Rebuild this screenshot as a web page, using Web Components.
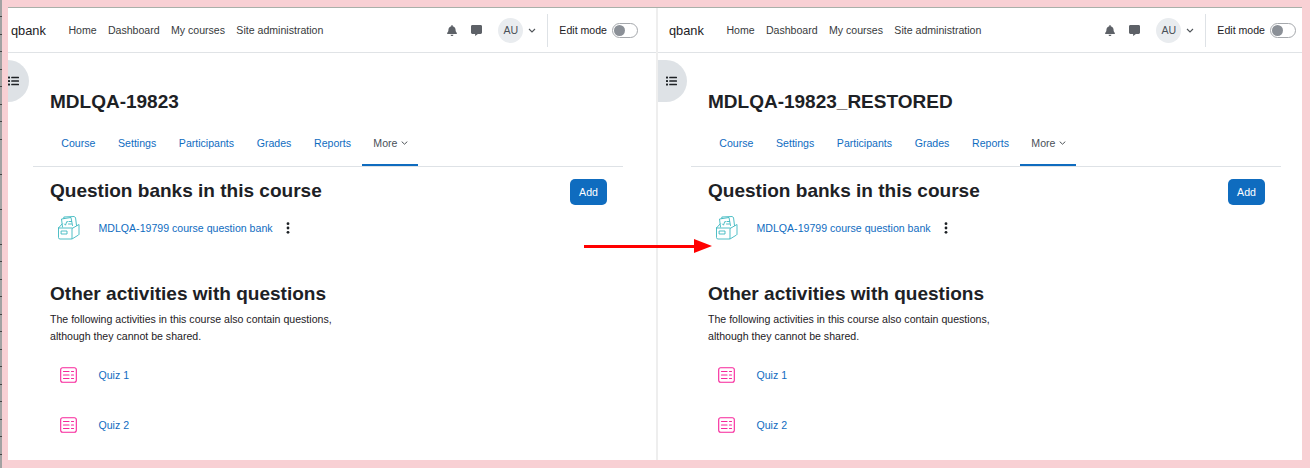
<!DOCTYPE html>
<html>
<head>
<meta charset="utf-8">
<title>qbank</title>
<style>
html, body { margin: 0; padding: 0; height: 100%; }
body { background: #f8d0d4; font-family: "Liberation Sans", Arial, sans-serif; overflow: hidden; }
</style>
</head>
<body>
<qb-screen>
  <qb-panel course="MDLQA-19823" inset></qb-panel>
  <qb-panel course="MDLQA-19823_RESTORED"></qb-panel>
</qb-screen>

<script>
// small icons used in more than one place
const icons = {
    bell: '<svg width="10" height="11" viewBox="0 0 448 512" preserveAspectRatio="none"><path fill="#5d6167" d="M224 512c35 0 64-29 64-64H160c0 35 29 64 64 64zm215-150c-19-21-56-52-56-154 0-78-54-140-127-155V32a32 32 0 1 0-64 0v21C119 68 65 130 65 208c0 102-37 133-56 154-6 6-9 14-9 22 0 16 13 32 32 32h384c19 0 32-16 32-32 0-8-3-16-9-22z"/></svg>',
    comment: '<svg width="11" height="11" viewBox="0 0 512 512"><path fill="#5d6167" d="M64 0h384c35 0 64 29 64 64v288c0 35-29 64-64 64H320l-110 90c-8 6-18 0-18-8v-82H64c-35 0-64-29-64-64V64C0 29 29 0 64 0z"/></svg>',
    caret: '<svg width="8" height="5" viewBox="0 0 8 5"><path fill="none" stroke="#4f5459" stroke-width="1.1" d="M1 1l3 3 3-3"/></svg>',
    tabCaret: '<svg width="7" height="4" viewBox="0 0 7 4"><path fill="none" stroke="#4f5459" stroke-width="1" d="M.7.6l2.800 2.600L6.300.6"/></svg>',
    list: '<svg width="11" height="10" viewBox="0 0 11 10"><g fill="#1d2125"><rect x="0" y="0.5" width="2" height="2" rx=".6"/><rect x="0" y="4" width="2" height="2" rx=".6"/><rect x="0" y="7.5" width="2" height="2" rx=".6"/><rect x="3.2" y="0.8" width="7.8" height="1.4" rx=".5"/><rect x="3.2" y="4.3" width="7.8" height="1.4" rx=".5"/><rect x="3.2" y="7.8" width="7.8" height="1.4" rx=".5"/></g></svg>',
    bank: '<svg width="22" height="24" viewBox="0 0 22 24" fill="none" stroke="#3cb8c0" stroke-width=".9" stroke-linejoin="round" stroke-linecap="round"><path d="M.5 12v9.500a1.500 1.500 0 0 0 1.500 1.500h11a1 1 0 0 0 1-1V12.500L21 8.500v9.500a1 1 0 0 1-.5 1L14 23"/><path d="M.5 12l3.500-4M.5 12H14"/><path d="M4.500 11L3.500 3 13 1.500l1.500 8"/><path d="M6 2.500L5.800 1 16 .5l1.500 1 1 8"/><path d="M6.500 8l1 1.200 1.200-3.500h1M11 5.500h2.500M10.500 8h3"/><rect x="3.500" y="15" width="5.500" height="3"/></svg>',
    quiz: '<svg width="17" height="16" viewBox="0 0 17 16" fill="none" stroke="#f7259b" stroke-width="1.100" stroke-linecap="round"><rect x=".7" y=".7" width="15.600" height="14.600" rx="2"/><path d="M3.500 4.500h5.500M3.500 8h5.500M3.500 11.500h5.500M11.500 4.500h2M11.500 8h2M11.500 11.500h2" stroke-width="1.200"/></svg>',
    dots: '<svg width="4" height="12" viewBox="0 0 4 12"><g fill="#1d2125"><circle cx="2" cy="1.700" r="1.400"/><circle cx="2" cy="6" r="1.400"/><circle cx="2" cy="10.300" r="1.400"/></g></svg>'
};

const navbarTemplate = document.createElement('template');
navbarTemplate.innerHTML = `
    <style>
    :host {
        display: flex;
        align-items: center;
        height: 45px;
        box-sizing: border-box;
        border-bottom: 1px solid #e0e3e6;
        padding: 0 19px 0 11px;
        font-size: 10.58px;
        color: #1d2125;
    }
    .brand { font-size: 12.800px; margin-right: 22.500px; }
    nav { display: flex; gap: 11.300px; color: #373a3c; }
    .right { margin-left: auto; display: flex; align-items: center; height: 100%; }
    .icon { display: flex; margin-right: 14px; }
    .icon + .icon { margin-right: 16px; }
    .avatar {
        width: 25px;
        height: 25px;
        border-radius: 50%;
        background: #e9ecef;
        display: flex;
        align-items: center;
        justify-content: center;
        color: #495057;
        margin-right: 5px;
    }
    .sep { width: 1px; height: 33px; background: #dee2e6; margin: 0 11px; }
    .toggle {
        width: 26px;
        height: 15px;
        box-sizing: border-box;
        border: 1px solid #a5a8ac;
        border-radius: 8px;
        margin-left: 5px;
        padding: 1px;
    }
    .toggle i { display: block; width: 11px; height: 11px; border-radius: 50%; background: #8b9097; }
    </style>
    <span class="brand">qbank</span>
    <nav>
        <span>Home</span>
        <span>Dashboard</span>
        <span>My courses</span>
        <span>Site administration</span>
    </nav>
    <div class="right">
        <span class="icon">${icons.bell}</span>
        <span class="icon">${icons.comment}</span>
        <span class="avatar">AU</span>
        ${icons.caret}
        <span class="sep"></span>
        <span>Edit mode</span>
        <span class="toggle"><i></i></span>
    </div>
`;

class QbNavbar extends HTMLElement {
    constructor() {
        super();
        this.attachShadow({ mode: 'open' });
        this.shadowRoot.appendChild(navbarTemplate.content.cloneNode(true));
    }
}

const tabsTemplate = document.createElement('template');
tabsTemplate.innerHTML = `
    <style>
    :host {
        display: flex;
        margin: 0 34px 0 33px;
        height: 46px;
        box-sizing: border-box;
        border-bottom: 1px solid #dee2e6;
        padding-left: 17px;
        font-size: 10.58px;
        color: #0f6cbf;
    }
    span {
        padding: 0 11.300px 2px;
        display: flex;
        align-items: center;
        gap: 4px;
        height: 45px;
        box-sizing: border-box;
    }
    .active { color: #495057; border-bottom: 2px solid #0f6cbf; padding: 0 10px 0 11px; }
    </style>
    <span>Course</span>
    <span>Settings</span>
    <span>Participants</span>
    <span>Grades</span>
    <span>Reports</span>
    <span class="active">More ${icons.tabCaret}</span>
`;

class QbTabs extends HTMLElement {
    constructor() {
        super();
        this.attachShadow({ mode: 'open' });
        this.shadowRoot.appendChild(tabsTemplate.content.cloneNode(true));
    }
}

const itemTemplate = document.createElement('template');
itemTemplate.innerHTML = `
    <style>
    :host { display: flex; align-items: center; height: 50px; color: #0f6cbf; font-size: 10.58px; }
    .pic { width: 48.500px; display: flex; padding-left: 8px; box-sizing: border-box; }
    .menu { display: flex; margin-left: 13px; }
    </style>
    <span class="pic"><slot name="icon"></slot></span>
    <span><slot></slot></span>
    <span class="menu"><slot name="menu"></slot></span>
`;

class QbItem extends HTMLElement {
    constructor() {
        super();
        this.attachShadow({ mode: 'open' });
        this.shadowRoot.appendChild(itemTemplate.content.cloneNode(true));
    }
}

const panelTemplate = document.createElement('template');
panelTemplate.innerHTML = `
    <style>
    :host {
        display: block;
        background: #fff;
        overflow: hidden;
        color: #1d2125;
    }
    .inner { width: 657px; position: relative; }
    :host([inset]) .inner { margin-left: -8px; }
    .drawer {
        position: absolute;
        left: 0;
        top: 52px;
        width: 29px;
        height: 42px;
        background: #dee2e6;
        border-radius: 0 21px 21px 0;
        display: flex;
        align-items: center;
        padding-left: 8px;
        box-sizing: border-box;
    }
    header { padding: 39px 50px 0; height: 68px; box-sizing: border-box; }
    h1 { margin: 0; font-size: 19px; line-height: 20px; font-weight: 700; }
    main { padding: 0 50px; }
    .head { display: flex; justify-content: space-between; align-items: flex-start; padding-top: 12px; height: 25px; }
    h2 { margin: 0; font-size: 19.050px; line-height: 24px; font-weight: 700; }
    h2.other { margin-top: 29px; }
    button {
        width: 37px;
        height: 26px;
        border: 0;
        border-radius: 5px;
        background: #0f6cbf;
        color: #fff;
        font: inherit;
        font-size: 10.58px;
        padding: 0;
    }
    p { margin: 5px 0 0; font-size: 10.58px; line-height: 17px; width: 300px; }
    .quiz { display: flex; margin-left: 2px; }
    </style>
    <div class="inner">
        <qb-navbar></qb-navbar>
        <div class="drawer">${icons.list}</div>
        <header><h1 id="course"></h1></header>
        <qb-tabs></qb-tabs>
        <main>
            <div class="head"><h2>Question banks in this course</h2><button>Add</button></div>
            <qb-item style="margin-top:-1px">
                <span slot="icon" style="display:flex">${icons.bank}</span>
                MDLQA-19799 course question bank
                <span slot="menu" style="display:flex">${icons.dots}</span>
            </qb-item>
            <h2 class="other">Other activities with questions</h2>
            <p>The following activities in this course also contain questions, although they cannot be shared.</p>
            <qb-item style="margin-top:5px"><span slot="icon" class="quiz">${icons.quiz}</span>Quiz 1</qb-item>
            <qb-item><span slot="icon" class="quiz">${icons.quiz}</span>Quiz 2</qb-item>
        </main>
    </div>
`;

class QbPanel extends HTMLElement {
    constructor() {
        super();
        this.attachShadow({ mode: 'open' });
        this.shadowRoot.appendChild(panelTemplate.content.cloneNode(true));
        this.shadowRoot.getElementById('course').innerText = this.getAttribute('course');
    }
}

const screenTemplate = document.createElement('template');
screenTemplate.innerHTML = `
    <style>
    :host {
        display: grid;
        grid-template-columns: 648px 1fr;
        column-gap: 2px;
        width: 1294px;
        height: 452px;
        margin: 8px 0 0 8px;
        position: relative;
        background: #eeeeee;
        box-shadow: 0 -1px 0 #a9b0a9;
    }
    /* window edge left of the pasted screenshots */
    .strip {
        position: absolute;
        left: -8px;
        top: -8px;
        width: 2px;
        height: 468px;
        background: repeating-linear-gradient(#a2a2a2 0, #a2a2a2 16.500px, #444 16.500px, #444 17.500px);
    }
    .arrow { position: absolute; left: 576px; top: 231px; display: block; }
    </style>
    <slot></slot>
    <span class="strip"></span>
    <svg class="arrow" width="128" height="14" viewBox="0 0 128 14">
        <rect x="0" y="6" width="111" height="3" fill="#f00"/>
        <path d="M110 0l18 7-18 7z" fill="#f00"/>
    </svg>
`;

class QbScreen extends HTMLElement {
    constructor() {
        super();
        this.attachShadow({ mode: 'open' });
        this.shadowRoot.appendChild(screenTemplate.content.cloneNode(true));
    }
}

window.customElements.define('qb-navbar', QbNavbar);
window.customElements.define('qb-tabs', QbTabs);
window.customElements.define('qb-item', QbItem);
window.customElements.define('qb-panel', QbPanel);
window.customElements.define('qb-screen', QbScreen);
</script>
</body>
</html>
